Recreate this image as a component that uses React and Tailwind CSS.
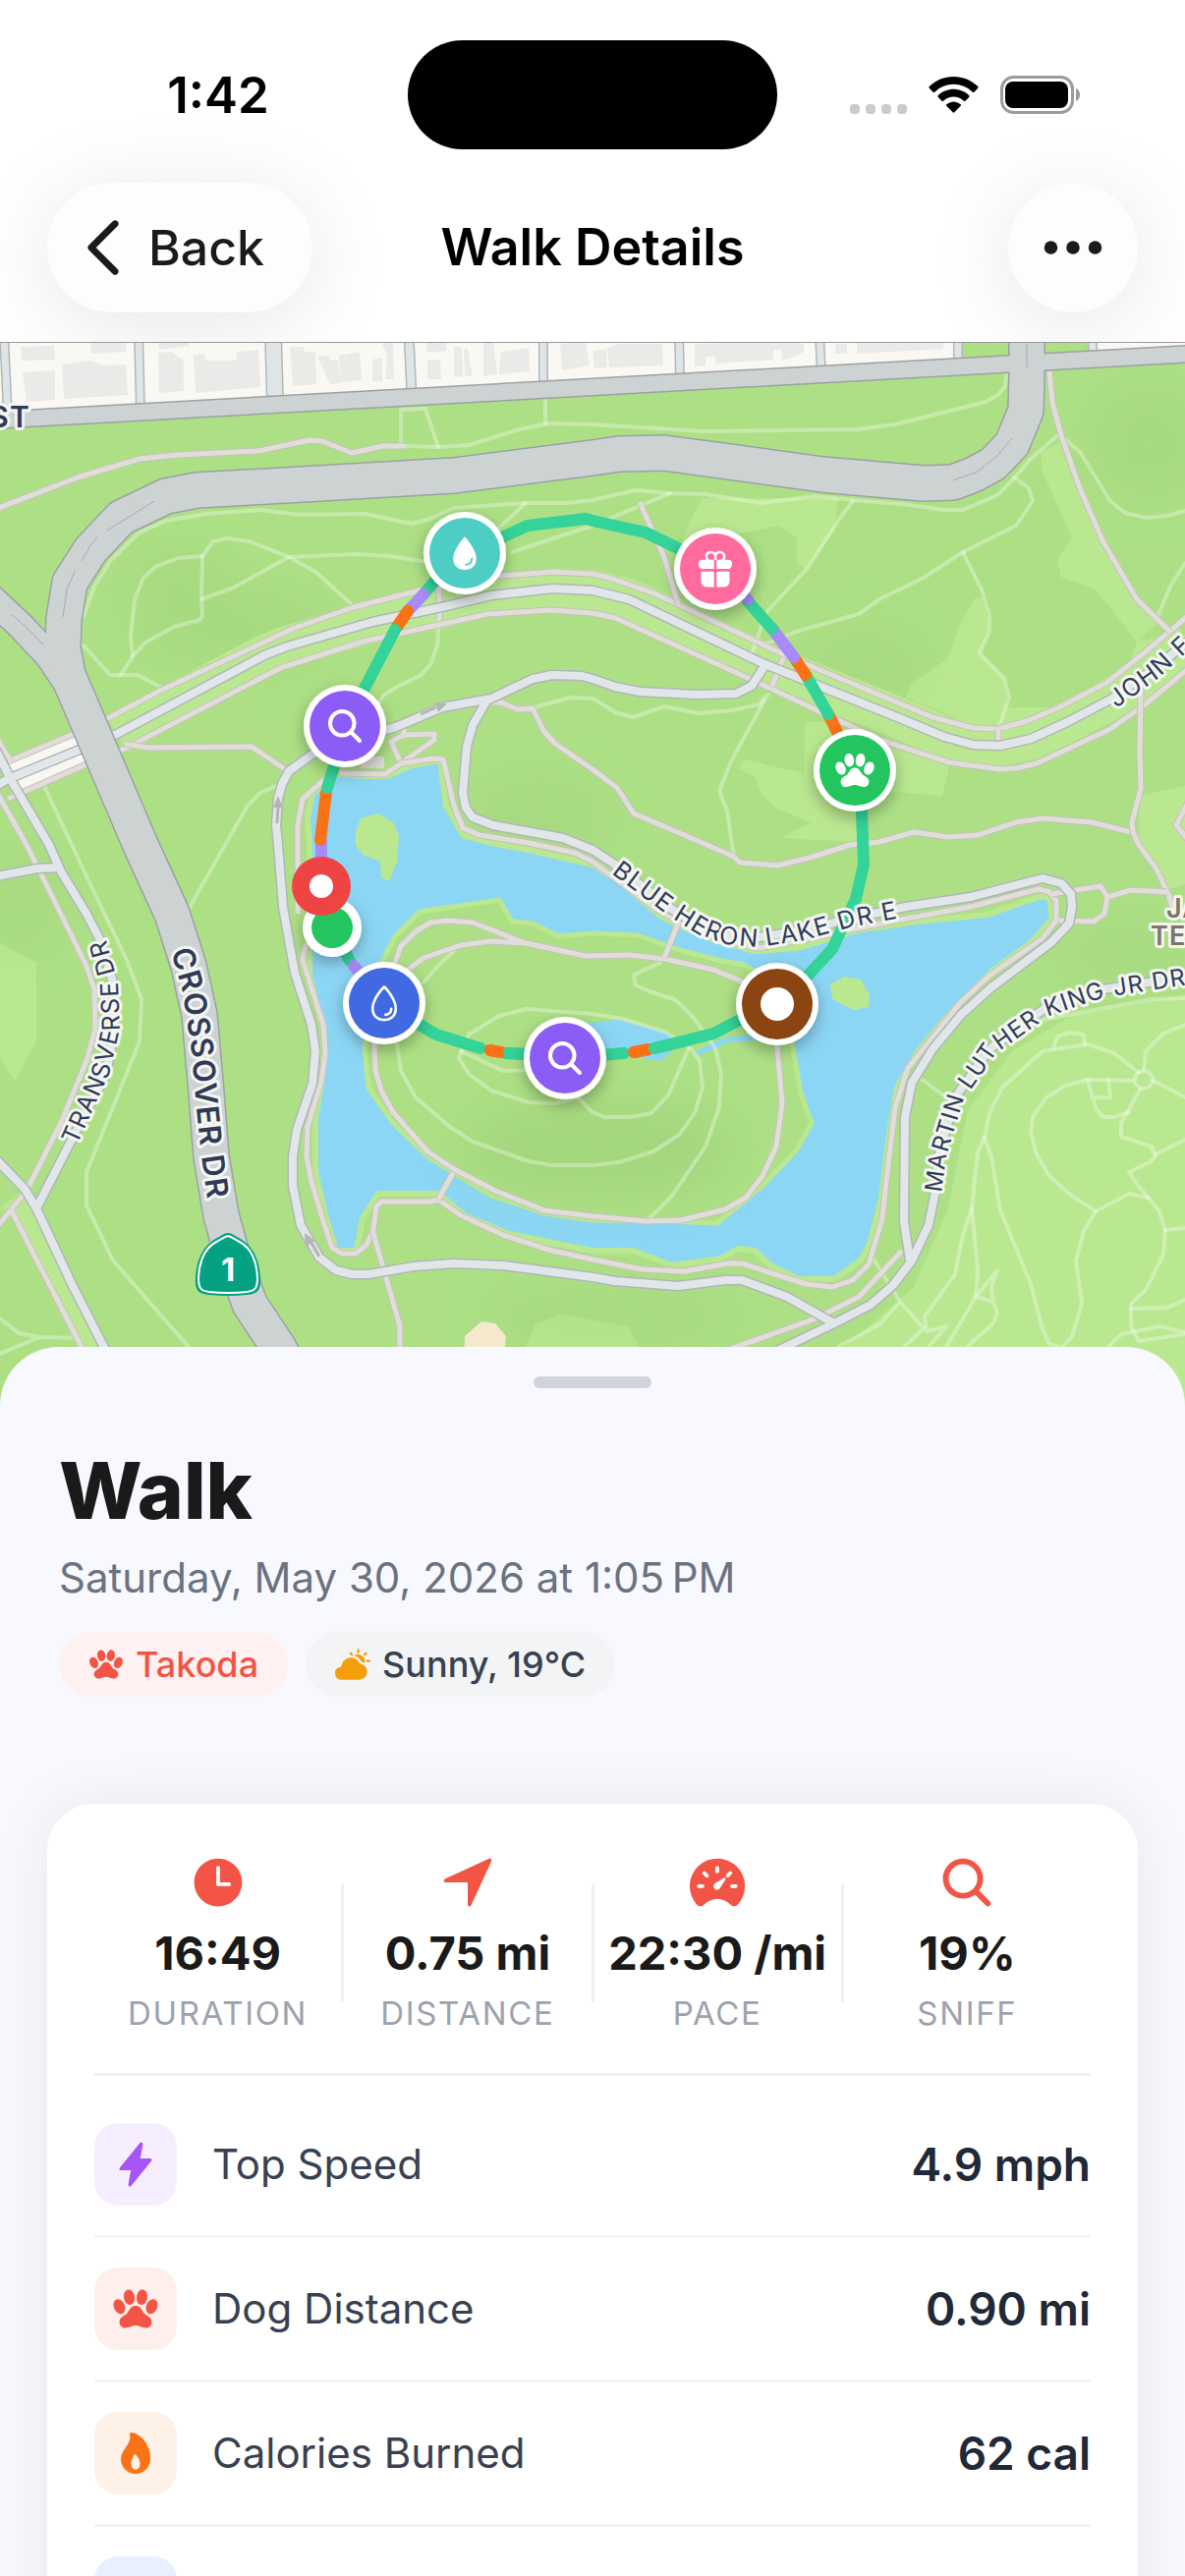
import {
  IoEllipsisHorizontal,
  IoFlame,
  IoFlash,
  IoGift,
  IoNavigate,
  IoPartlySunny,
  IoPaw,
  IoSearch,
  IoSpeedometer,
  IoTime,
  IoWater,
  IoWaterOutline,
} from 'react-icons/io5';

const stats = [
  { label: 'DURATION', value: '16:49', Icon: IoTime },
  { label: 'DISTANCE', value: '0.75 mi', Icon: IoNavigate },
  { label: 'PACE', value: '22:30 /mi', Icon: IoSpeedometer },
  { label: 'SNIFF', value: '19%', Icon: IoSearch },
];

const details = [
  { label: 'Top Speed', value: '4.9 mph', Icon: IoFlash, box: 'bg-[#f6eefe] text-[#a855f7]' },
  { label: 'Dog Distance', value: '0.90 mi', Icon: IoPaw, box: 'bg-[#feeeec] text-[#f25545]' },
  { label: 'Calories Burned', value: '62 cal', Icon: IoFlame, box: 'bg-[#fef1e8] text-[#f97316]' },
];

// Map data, all in map units
const blockStreets = [
  { d: 'M4 340L8 424', w: 8 },
  { d: 'M141 340L143 418', w: 8 },
  { d: 'M278 340L280 410', w: 16 },
  { d: 'M416 340L419 402', w: 9 },
  { d: 'M553 340L553 396', w: 8 },
  { d: 'M691 340L692 388', w: 8 },
  { d: 'M834 340L836 380', w: 8 },
  { d: 'M975 340L975 372', w: 8 },
  { d: 'M1112 340L1112 364', w: 8 },
];

const buildings = [
  'M21 353L55 352L56 366L22 367Z',
  'M23 379L56 377L56 407L27 409Z',
  'M63 371L92 367L104 372L128 371L130 402L65 406Z',
  'M92 348L128 348L128 358L93 360Z',
  'M161 348L193 348L193 352L162 356Z',
  'M161 359L175 358L187 367L187 398L162 400Z',
  'M197 361L208 360L209 367L240 367L241 358L263 356L265 394L199 400Z',
  'M295 353L309 353L310 358L321 358L322 391L298 393Z',
  'M323 363L334 362L336 366L344 367L346 390L336 391Z',
  'M345 362L366 358L368 387L346 389Z',
  'M379 366L389 364L389 388L379 388Z',
  'M389 350L400 348L401 386L392 386L394 362Z',
  'M434 348L454 348L454 357L434 359Z',
  'M435 367L448 366L449 386L435 386Z',
  'M462 353L470 353L471 383L462 384ZM472 356L476 354L481 382L473 383Z',
  'M492 348L502 348L506 381L492 383Z',
  'M510 358L538 354L539 378L508 381Z',
  'M570 350L596 348L600 372L572 377Z',
  'M603 358L617 355L618 374L605 375Z',
  'M618 354L630 350L674 350L675 372L620 374Z',
  'M707 350L795 348L818 350L818 358L806 364L796 366L795 356L787 356L787 366L728 370L728 363L719 363L718 372L707 373Z',
  'M850 350L862 350L862 360L850 360ZM872 348L960 348L960 355L872 360Z',
];

const lightPatches = [
  'M715 507L853 507L849 540L820 580L811 573L811 547L793 535L753 543L720 540L690 560L700 535Z',
  'M993 608L1000 608L1007 640L997 665L1022 690L1026 720L1076 720L1037 737L991 738L922 710L926 697L965 670L976 637Z',
  'M1059 460L1080 450L1099 497L1122 550L1157 610L1180 633L1157 653L1115 600L1080 587L1076 570L1091 547L1061 480Z',
  'M757 773L818 787L820 735L843 735L903 760L966 780L959 810L926 807L880 805L872 857L795 853L826 837L791 823L776 810L768 790L752 783Z',
  'M0 960L37 980L37 1060L15 1100L0 1077Z',
  'M1206 1012L1090 1034L1030 1070L985 1130L965 1230L930 1310L860 1371L860 1440L1206 1440Z',
  'M1160 810L1206 800L1206 900L1190 905L1159 860Z',
  'M1157 653L1192 645L1160 705L1135 720Z',
  'M535 1371L545 1348L570 1338L640 1350L650 1371Z',
  'M0 1230L12 1233L83 1371L108 1371L37 1230L25 1210Z',
];

const footpaths = [
  'M412 454L446 455L477 453L529 437L558 431L603 432L715 439L872 437L911 432L1003 409L1016 402L1023 393L1024 382',
  'M408 453L408 417L433 416L446 455M555 408L555 431',
  'M85 627L96 597L113 570L142 542L169 530L210 523L265 519L304 524L371 523L419 533L438 528L462 517L535 512L577 512L603 509L647 499L680 502L718 503L774 512L830 505L868 509L918 513L961 519L980 519L1015 504L1032 487L1049 467L1078 442L1099 460L1130 510L1145 522L1166 527L1188 525L1206 520',
  'M535 512L507 538M682 502L603 535L521 562',
  'M123 687L135 668L133 647L137 610L146 588L158 577L181 568L206 566L217 551L231 548L254 551L294 567L321 582L360 617',
  'M206 566L205 610L206 627L203 631L177 638L148 654L135 668',
  'M205 610L238 598L294 567L362 564L396 566L435 572',
  'M85 657L112 687L140 687L163 699',
  'M447 630L445 657L438 677L427 688L404 699L390 708L385 717',
  'M544 720L581 710L603 711L628 726L645 730L676 719L711 726L745 723L772 717L782 707',
  'M778 713L745 773L732 805L740 825L745 860L747 872',
  'M868 510L855 527L822 578L780 623L766 663',
  'M780 655L813 642L874 625L895 610L940 588L980 562L1034 535L1051 510L1047 497L1032 486',
  'M980 562L999 600L1007 627L1007 643L997 665L1022 690L1027 710L1016 742',
  'M1206 573L1191 597L1178 628',
  'M281 800L265 807L252 820L229 860L192 925',
  'M46 802L73 860L100 917L129 977L144 1017L142 1060L119 1117L88 1193L88 1227L115 1283L192 1371',
  'M0 1342L19 1357L40 1361L79 1362M40 1361L0 1378',
  'M467 963L446 983L431 1000',
  'M404 1063L408 1090L423 1117L458 1147L481 1162L538 1182L562 1186L603 1186L630 1183L665 1172L691 1155L707 1133L715 1107L712 1080L703 1067L676 1050L634 1037L603 1032L535 1027L508 1034L477 1053L467 1077L477 1093L500 1110L538 1122L565 1123L588 1117',
  'M469 1070L512 1090L538 1089M588 1117L603 1132L615 1137L641 1137L663 1133L680 1115L701 1067',
  'M672 980L645 992L647 1003L661 1009L688 1018L707 1037L728 1067L734 1093L732 1127L718 1167L684 1217L659 1242',
  'M1061 1038L1172 1017L1206 1016',
  'M1153 1100L1107 1099L1084 1105L1064 1118L1051 1137L1049 1153L1055 1175L1068 1197L1088 1215L1115 1233L1103 1253L1095 1283L1101 1327L1091 1360L1080 1372L1068 1368L1061 1353L1049 1307L1018 1232L1009 1177L1002 1158L1007 1133L1020 1107L1061 1070L1107 1063L1134 1072L1159 1092',
  'M1072 1067L1076 1055L1088 1051L1103 1053L1104 1063',
  'M1164 1089L1166 1070L1184 1052L1206 1043M1174 1100L1206 1117',
  'M1161 1108L1141 1143L1141 1157L1172 1167L1176 1177L1170 1183L1149 1193L1157 1205L1180 1233L1186 1253L1184 1277L1166 1313L1151 1327L1151 1350L1159 1365L1206 1358',
  'M1115 1233L1149 1215L1168 1219M1206 1250L1186 1252M1151 1332L1188 1331L1206 1323M1206 1160L1176 1175',
  'M1107 1099L1115 1127L1122 1137L1134 1137L1149 1132M1128 1099L1130 1117L1111 1117',
  'M1002 1158L995 1173L989 1230L980 1257L972 1297L941 1340L943 1355L963 1350L945 1371',
  'M989 1230L995 1293L993 1320L963 1371',
  'M1015 1293L993 1320L1011 1325L1009 1310L1015 1293M1011 1325L1015 1337L1011 1347L984 1371',
  'M888 1280L916 1325L940 1352L920 1371M916 1325L895 1348L853 1371',
  'M936 1097L963 1117',
  'M1128 1371L1141 1358L1180 1350L1206 1356',
];

const trails = [
  'M-4 518L79 486L142 467L181 463L263 459L315 448L328 449L358 461L390 454L412 454',
  'M8 775L75 747L110 731L163 703L300 639L360 618L427 601L511 586L563 582L603 584L620 588L663 603L690 615L799 667L949 730L990 741L1016 742L1045 734L1078 720L1126 695L1164 665L1210 626',
  'M8 813L88 778L127 762L285 680L369 653L496 625L561 621L603 624L626 629L768 693L895 753L966 776L1018 783L1034 782L1055 777L1130 742L1164 718L1210 680',
  'M447 600L447 630M797 670L786 698M1016 742L1016 756M-4 750L10 773',
  'M127 757L150 761L256 760L290 783',
  'M411 737L411 748M398 755L411 748L442 747L442 753L408 777Z',
  'M346 787L392 788L408 777L442 772L451 773L462 820L471 843L488 850L538 858L585 868L603 877L634 900L665 923L690 938L738 958L772 965L834 953L911 937L988 923L1057 905L1068 908L1075 917L1075 937L1061 955L1007 993L978 1020L924 1087L911 1127L903 1193L898 1240L884 1287L868 1303L847 1310L820 1307L755 1286L740 1286L697 1294L653 1292L603 1282L558 1272L512 1257L469 1237L446 1221L438 1223L388 1223L383 1228L380 1252L373 1267L362 1276L348 1276L338 1270L329 1243L317 1203L312 1177L313 1147L327 1100L331 1073L329 1043L308 977L312 960M303 930L303 840L308 813L331 793',
  'M446 1221L462 1192M379 1252L407 1350L407 1380',
  'M402 980L408 963L423 948L438 939L456 937L481 939L535 960L596 973L641 972L676 976L726 987L753 998L785 1030L791 1067L796 1123L790 1167L776 1197L759 1219L738 1231L693 1242L657 1243L603 1238L554 1232L504 1212L462 1190L435 1172L400 1132L388 1110L382 1090L381 1060L385 1030L415 987L431 975L469 962L500 958L535 960',
  'M690 940L676 975',
  'M500 715L510 715L527 722L542 721L554 745L565 757L603 783L628 802L645 828L715 858L747 872L753 878L791 881L824 873L865 860L895 857L930 847L965 852L995 850L1034 837L1061 833L1111 837L1151 847',
  'M651 511L676 567L691 617',
  'M1068 378L1071 410L1080 443L1099 497L1122 550L1157 610L1191 643',
  'M1157 690L1161 703L1160 767L1161 803L1152 837L1153 847L1159 860L1176 883L1189 910L1195 930',
  'M1070 910L1120 902L1127 913L1124 930L1113 938L1078 937M1127 913L1151 906L1188 908',
  'M1210 815L1197 840L1210 856',
  'M-4 805L27 860L42 890L88 983L96 1007L97 1047L88 1080L62 1143L27 1212L-4 1250M12 1233L83 1371L94 1396',
  'M730 1378L830 1342L874 1320L918 1273',
];

const roads = [
  'M-6 760L13 797L50 860L62 887L88 930L102 957L115 1000L117 1047L108 1093L73 1160L37 1230',
  'M-4 1180L25 1210L37 1230L73 1307L118 1395M-4 892L38 884L62 883',
  'M-6 801L8 793L81 763L119 747L269 667L292 658L379 633L454 617L500 606L563 599L603 601L640 610L776 675L918 732L961 750L990 758L1018 759L1049 752L1086 735L1130 712L1172 683L1210 652',
  'M778 678L765 698L749 706L709 707L651 704L626 699L603 691L592 688L562 687L542 691L500 711L450 720L410 737L400 741L350 753L319 767L294 785L287 798L283 813L281 840L283 860L288 923L300 990L317 1043L321 1070L318 1103L302 1150L298 1177L298 1207L306 1247L325 1280L342 1293L358 1297L375 1297L421 1289L462 1286L512 1288L603 1300L626 1304L690 1309L738 1303L755 1303L801 1320L849 1347',
  'M496 712L481 738L475 760L471 807L474 822L481 832L502 840L573 853L603 865L626 880L680 923L707 940L738 952L772 954L818 947L865 935L922 923L988 913L1061 894L1080 899L1090 910L1091 923L1088 940L1070 959L1009 1005L978 1033L949 1068L928 1102L921 1137L920 1243L926 1283',
  'M1210 994L1122 1007L1065 1025L1007 1068L972 1117L955 1177L952 1213L945 1247L928 1283L909 1308L886 1328L849 1347L795 1373L770 1385',
];

const jfk = 'M119 747L269 667L292 658L379 633L454 617L500 606L563 599L603 601L640 610L776 675L918 732L961 750L990 758L1018 759L1049 752L1086 735L1130 712L1172 683L1210 652';
const fulton = 'M-10 428L603 394L1216 360';
const branch = 'M-12 606L21 637L50 668L66 692';
const highway = 'M1045 330L1045 382L1044 418L1030 452L1011 472L991 483L970 491L939 492L837 483L676 461L630 462L603 466L462 484L308 493L200 499L169 505L123 527L92 560L71 593L65 630L64 660L69 687L96 750L143 860L175 930L192 983L203 1033L210 1113L215 1177L225 1237L235 1273L254 1327L283 1371L310 1420';

const lake = 'M338 788L373 790L394 790L419 779L448 774L454 820L471 850L500 858L538 865L603 880L630 897L672 932L691 942L730 958L768 968L811 965L872 947L934 938L1005 931L1057 913L1068 913L1071 935L1049 960L1011 987L968 1030L934 1070L913 1107L905 1153L897 1220L886 1263L876 1283L849 1302L813 1302L784 1288L768 1273L751 1271L734 1281L684 1288L645 1273L603 1273L577 1268L515 1255L473 1237L446 1215L385 1215L369 1240L363 1273L342 1273L331 1237L321 1193L321 1137L329 1093L329 1047L315 993L315 860L313 833L317 810Z';
const island = 'M387 983L402 953L427 928L481 920L508 916L521 938L542 940L569 953L603 950L649 952L695 968L734 978L757 982L790 1000L807 1067L815 1113L826 1143L811 1170L776 1207L730 1245L680 1243L603 1242L554 1235L500 1217L435 1177L400 1143L375 1107L371 1067L379 1010Z';

const route = [
  { d: 'M327 902L327 855', color: '#a78bfa' },
  { d: 'M326 855L332 807', color: '#f97316' },
  { d: 'M333 802L340 780L351 739', color: '#34d399' },
  { d: 'M431 605L473 555', color: '#34d399' },
  { d: 'M415 622L431 605', color: '#a78bfa' },
  { d: 'M404 638L415 622', color: '#f97316' },
  { d: 'M351 739L402 641', color: '#34d399' },
  { d: 'M473 563L515 545L537 535L596 528L603 530L657 542L690 558L728 579', color: '#34d399' },
  { d: 'M843 727L853 747L870 784', color: '#f97316' },
  { d: 'M820 687L843 727', color: '#34d399' },
  { d: 'M808 669L820 687', color: '#f97316' },
  { d: 'M786 640L808 669', color: '#a78bfa' },
  { d: 'M761 612L786 640', color: '#34d399' },
  { d: 'M728 579L761 610', color: '#a78bfa' },
  { d: 'M870 784L877 827L879 880L871 915L847 966L822 993L791 1022L749 1040L726 1052L666 1067', color: '#34d399' },
  { d: 'M660 1068L645 1071', color: '#f97316' },
  { d: 'M666 1067L700 1059', color: '#34d399' },
  { d: 'M635 1072L575 1077L535 1073L515 1072', color: '#34d399' },
  { d: 'M645 1071L650 1070', color: '#f97316' },
  { d: 'M510 1071L499 1069', color: '#f97316' },
  { d: 'M518 1072L535 1073', color: '#34d399' },
  { d: 'M489 1067L444 1053L427 1043L391 1021', color: '#34d399' },
  { d: 'M499 1069L503 1070', color: '#f97316' },
  { d: 'M356 978L338 945', color: '#34d399' },
  { d: 'M391 1021L360 983', color: '#a78bfa' },
];

const pins = [
  { x: 473, y: 563, color: '#4ecdc4', Icon: IoWater, size: 42 },
  { x: 728, y: 579, color: '#ff6b9d', Icon: IoGift, size: 42 },
  { x: 351, y: 739, color: '#8b5cf6', Icon: IoSearch, size: 42 },
  { x: 870, y: 784, color: '#22c55e', Icon: IoPaw, size: 42 },
  { x: 391, y: 1021, color: '#4169e1', Icon: IoWaterOutline, size: 42 },
  { x: 575, y: 1077, color: '#8b5cf6', Icon: IoSearch, size: 42 },
  { x: 791, y: 1022, color: '#8b4513', Icon: null, size: 0 },
];

function Line({ d, outer, inner, casing, fill }) {
  return (
    <>
      <path d={d} stroke={casing} strokeWidth={outer} />
      <path d={d} stroke={fill} strokeWidth={inner} />
    </>
  );
}

function Pin({ x, y, color, Icon, size }) {
  return (
    <g>
      <circle cx={x} cy={y} r="42" fill="#fff" filter="url(#pinShadow)" />
      <circle cx={x} cy={y} r="36" fill={color} />
      {Icon ? (
        <Icon x={x - size / 2} y={y - size / 2} size={size} color="#fff" />
      ) : (
        <circle cx={x} cy={y} r="17" fill="#fff" />
      )}
    </g>
  );
}

function RouteMap() {
  return (
    <svg viewBox="0 349 1206 1082" className="block w-full shrink-0 bg-[#ade085]" role="img" aria-label="Walk route map">
      <defs>
        <filter id="soft" x="-50%" y="-50%" width="200%" height="200%">
          <feGaussianBlur stdDeviation="22" />
        </filter>
        <filter id="pinShadow" x="-50%" y="-50%" width="200%" height="200%">
          <feDropShadow dx="0" dy="6" stdDeviation="8" floodColor="#000" floodOpacity="0.3" />
        </filter>
        <path id="crossoverLabel" d="M174 968L186 1010L195 1070L200 1130L205 1177L218 1270" />
        <path id="transverseLabel" d="M78 1166L111 1093L122 1047L120 1000L106 950L95 920" />
        <path id="heronLabel" d="M622 889L680 932L709 950L738 961L772 964L818 957L865 944L922 933L988 923" />
        <path id="kingLabel" d="M958 1214L963 1177L980 1121L1013 1073L1068 1034L1124 1015L1216 1001" />
        <path id="johnLabel" d="M1136 721L1178 691L1230 643" />
      </defs>

      {/* terrain */}
      <g fill="#bae890">
        {lightPatches.map((d) => (
          <path key={d} d={d} />
        ))}
      </g>
      <g fill="#94c771" opacity="0.22" filter="url(#soft)">
        <ellipse cx="240" cy="640" rx="100" ry="40" />
        <ellipse cx="180" cy="590" rx="60" ry="30" />
        <ellipse cx="550" cy="830" rx="70" ry="40" />
        <ellipse cx="20" cy="920" rx="40" ry="50" />
        <ellipse cx="880" cy="680" rx="60" ry="40" />
        <ellipse cx="1170" cy="450" rx="60" ry="60" />
        <ellipse cx="1150" cy="970" rx="70" ry="30" />
        <ellipse cx="620" cy="1340" rx="130" ry="30" />
      </g>
      <path d="M472 1380L473 1360L490 1345L504 1347L515 1360L513 1380Z" fill="#f4e9cd" />

      {/* city blocks */}
      <path d="M0 340L976 340L976 365L0 420Z" fill="#faf8f2" />
      <path d="M1116 340L1206 340L1206 352L1116 357Z" fill="#faf8f2" />
      <g fill="#ebeae8">
        {buildings.map((d) => (
          <path key={d} d={d} />
        ))}
      </g>
      <path d="M8 778L78 747L88 777L14 810Z" fill="#f8f7f1" />

      <g fill="none" strokeLinejoin="round">
        <path d={jfk} stroke="#bae890" strokeWidth="42" />
        {blockStreets.map(({ d, w }) => (
          <Line key={d} d={d} outer={w + 2} inner={w - 1} casing="#b0b8ba" fill="#dfe5e6" />
        ))}
      </g>

      {/* water */}
      <path d={lake} fill="#8bd6f5" stroke="#bae890" strokeWidth="6" strokeLinejoin="round" />
      <path d={island} fill="#ade085" stroke="#bae890" strokeWidth="5" strokeLinejoin="round" />
      <ellipse cx="610" cy="1170" rx="140" ry="50" fill="#94c771" opacity="0.35" filter="url(#soft)" />
      <path d="M590 1042L630 1038L680 1052L691 1063L672 1080L640 1074L590 1068Z" fill="#8bd6f5" />
      <path d="M707 1070L738 1056L785 1052L785 1058L740 1061L712 1074Z" fill="#8bd6f5" />
      <g fill="#bae890">
        <path d="M385 828L400 837L406 850L404 877L396 897L388 893L387 877L369 870L362 860L362 847L367 833Z" />
        <path d="M859 994L876 997L885 1012L884 1025L868 1028L847 1017L845 1002Z" />
      </g>

      <g fill="none" strokeLinejoin="round">
        <g stroke="#fff" strokeOpacity="0.32" strokeWidth="4" strokeLinecap="round">
          {footpaths.map((d) => (
            <path key={d} d={d} />
          ))}
          <circle cx="1164" cy="1099" r="9" />
        </g>
        <path d="M372 770L391 770L391 782L366 782Z" fill="#dedcda" />
        {trails.map((d) => (
          <Line key={d} d={d} outer="7" inner="5" casing="#c6c2be" fill="#e1deda" />
        ))}
        {roads.map((d) => (
          <path key={d} d={d} stroke="#b0b6b9" strokeWidth="11" />
        ))}
        {roads.map((d) => (
          <path key={d} d={d} stroke="#e1e7e8" strokeWidth="8" />
        ))}
        <path d={fulton} stroke="#9ba1a3" strokeWidth="19" />
        <path d={branch} stroke="#9ba1a3" strokeWidth="30" />
        <path d={highway} stroke="#9ba1a3" strokeWidth="38" />
        <path d={fulton} stroke="#cdd3d3" strokeWidth="16" />
        <path d={branch} stroke="#cdd3d3" strokeWidth="27" />
        <path d={highway} stroke="#cdd3d3" strokeWidth="35" />
        <path d="M12 626L25 637L44 656M64 628L68 600L76 582M83 571L92 555L100 546M109 540L157 510M970 489L995 480L1015 464L1030 446M1045 350L1045 374" stroke="#a5abad" strokeWidth="1" />
        <path d="M428 727L444 720M282 838L283 822M325 1279L317 1265" stroke="#b5b5b3" strokeWidth="3" />
      </g>
      <g fill="#b5b5b3">
        <path d="M455 716L443 715L446 725Z" />
        <path d="M283 810L278 822L288 822Z" />
        <path d="M310 1255L311 1269L321 1263Z" />
      </g>

      {/* walked route */}
      <g fill="none" strokeWidth="12" strokeLinecap="round" strokeLinejoin="round">
        {route.map(({ d, color }) => (
          <path key={d} d={d} stroke={color} />
        ))}
      </g>

      {/* street names */}
      <g
        fill="#303a57"
        stroke="#f4f6f2"
        strokeWidth="6"
        strokeLinejoin="round"
        paintOrder="stroke"
        className="font-[Inter,sans-serif] text-[25px] tracking-wider"
      >
        <text className="text-[31px] font-semibold">
          <textPath href="#crossoverLabel">CROSSOVER DR</textPath>
        </text>
        <text>
          <textPath href="#transverseLabel">TRANSVERSE DR</textPath>
        </text>
        <text>
          <textPath href="#heronLabel">BLUE HERON LAKE DR E</textPath>
        </text>
        <text className="text-[24px]">
          <textPath href="#kingLabel">MARTIN LUTHER KING JR DR</textPath>
        </text>
        <text>
          <textPath href="#johnLabel">JOHN F</textPath>
        </text>
        <text x="31" y="435" textAnchor="end" className="text-[30px] font-semibold">ST</text>
        <g fill="#7e7565" className="text-[27px] font-semibold">
          <text x="1187" y="934">JA</text>
          <text x="1171" y="962">TE</text>
        </g>
      </g>

      {/* route 1 shield */}
      <path d="M232 1255C236 1255 239 1258 243 1260C257 1267 264 1282 265 1300C266 1314 262 1317 251 1318Q232 1320 213 1318C202 1317 198 1314 199 1300C200 1282 207 1267 221 1260C225 1258 228 1255 232 1255Z" fill="#04a282" />
      <path d="M232 1258C236 1259 238 1261 242 1263C255 1269 261 1283 262 1300C262 1311 260 1314 251 1315Q232 1317 213 1315C204 1314 202 1311 202 1300C203 1283 209 1269 222 1263C226 1261 228 1259 232 1258Z" fill="none" stroke="#fff" strokeWidth="2" />
      <text x="232" y="1304" textAnchor="middle" fill="#fff" className="font-[Inter,sans-serif] text-[33px] font-bold">1</text>

      {/* start and finish */}
      <circle cx="338" cy="944" r="30" fill="#fff" filter="url(#pinShadow)" />
      <circle cx="338" cy="944" r="21" fill="#22c55e" />
      <circle cx="327" cy="902" r="30" fill="#ef4444" />
      <circle cx="327" cy="902" r="12" fill="#fff" />

      {pins.map((pin) => (
        <Pin key={`${pin.x}-${pin.y}`} {...pin} />
      ))}
    </svg>
  );
}

function StatusBar() {
  return (
    <div className="grid grid-cols-3 items-center pt-[41px]">
      <div className="pl-[42px] text-center text-[51px] leading-[60px] font-semibold text-black">1:42</div>
      <div className="h-[111px] w-[376px] justify-self-center rounded-full bg-black" />
      <div className="flex items-center justify-end gap-[22px] pr-[106px]">
        <div className="flex gap-[6px] pt-7">
          <span className="size-[10px] rounded-[4px] bg-[#cbcbcb]" />
          <span className="size-[10px] rounded-[4px] bg-[#cbcbcb]" />
          <span className="size-[10px] rounded-[4px] bg-[#cbcbcb]" />
          <span className="size-[10px] rounded-[4px] bg-[#cbcbcb]" />
        </div>
        <svg viewBox="0 0 51 37" className="h-[37px] w-[51px]" aria-label="Wi-Fi">
          <path d="M25.500 0C35 0 43.600 3.700 50 9.800a1.500 1.500 0 0 1 0 2.200l-3.300 3.400a1.500 1.500 0 0 1-2.200 0A27.500 27.500 0 0 0 25.500 7.800A27.500 27.500 0 0 0 6.500 15.400a1.500 1.500 0 0 1-2.200 0L1 12a1.500 1.500 0 0 1 0-2.200C7.400 3.700 16 0 25.500 0Z" />
          <path d="M25.500 12.800C31.500 12.800 37 15.100 41.100 18.900a1.500 1.500 0 0 1 0 2.200l-3.400 3.400a1.500 1.500 0 0 1-2.100 0A15 15 0 0 0 25.500 20.600A15 15 0 0 0 15.400 24.500a1.500 1.500 0 0 1-2.100 0L9.900 21.100a1.500 1.500 0 0 1 0-2.200C14 15.100 19.500 12.800 25.500 12.800Z" />
          <path d="M25.500 25.400a11 11 0 0 1 6.900 2.500a1.500 1.500 0 0 1 .1 2.200l-5.900 6a1.500 1.500 0 0 1-2.200 0l-5.900-6a1.500 1.500 0 0 1 .1-2.200a11 11 0 0 1 6.900-2.500Z" />
        </svg>
        <svg viewBox="0 0 82 39" className="h-[39px] w-[82px]" aria-label="Battery">
          <rect x="1.500" y="1.500" width="72" height="36" rx="12" fill="none" stroke="#9b9b9b" strokeWidth="3" />
          <rect x="5" y="6" width="64" height="27" rx="8" />
          <path d="M77 13C80 14 81 17 81 19.500S80 25 77 26Z" fill="#9b9b9b" />
        </svg>
      </div>
    </div>
  );
}

function Header() {
  const floating = 'flex h-[132px] items-center rounded-full bg-[#fdfdfd] text-[#1a1a1a] shadow-[0_12px_90px_rgba(0,0,0,0.1)]';
  return (
    <header className="relative z-10 shrink-0 overflow-hidden border-b border-[#9a9a9a] bg-white">
      <StatusBar />
      <div className="grid grid-cols-[1fr_auto_1fr] items-center px-12 pt-[34px] pb-[30px]">
        <button type="button" className={`${floating} w-[270px] gap-[30px] pl-10`}>
          <svg viewBox="0 0 34 58" className="h-[58px] w-[33px]" fill="none" stroke="currentColor" strokeWidth="7" strokeLinecap="round" strokeLinejoin="round" aria-hidden="true">
            <path d="M30 4L5 29L30 54" />
          </svg>
          <span className="text-[50px] leading-[60px] font-medium">Back</span>
        </button>
        <h1 className="text-[52px] leading-[60px] font-semibold text-black">Walk Details</h1>
        <button type="button" aria-label="More options" className={`${floating} w-[132px] justify-center justify-self-end`}>
          <IoEllipsisHorizontal size={72} />
        </button>
      </div>
    </header>
  );
}

export default function App() {
  return (
    <div className="flex h-screen flex-col overflow-hidden bg-[#f8f9ff] font-[Inter,sans-serif]">
      <Header />
      <RouteMap />

      <main className="relative -mt-[60px] shrink-0 rounded-t-[60px] bg-[#f8f9ff] pt-[30px]">
        <div className="mx-auto h-3 w-[120px] rounded-full bg-[#d0d3dc]" />

        <section className="px-[60px] pt-[54px]">
          <h2 className="text-[80px] leading-[100px] font-extrabold text-[#1a1a1a]">Walk</h2>
          <p className="mt-3 text-[42px] leading-[54px] text-[#6b7280]">Saturday, May 30, 2026 at 1:05{'\u202f'}PM</p>
          <div className="mt-[28px] flex gap-[18px]">
            <span className="flex h-[66px] items-center gap-3 rounded-full bg-[#fff1f1] px-[30px] text-[36px] font-medium text-[#f25545]">
              <IoPaw size={36} />
              Takoda
            </span>
            <span className="flex h-[66px] items-center gap-3 rounded-full bg-[#f2f4f6] px-[30px] text-[36px] font-medium text-[#374151]">
              <IoPartlySunny size={36} color="#f59e0b" />
              Sunny, 19°C
            </span>
          </div>
        </section>

        <section className="mx-12 mt-[109px] rounded-[48px] bg-white px-12 pt-[50px] pb-12 shadow-[0_0_60px_rgba(0,0,0,0.07)]">
          <div className="flex items-center border-b-[3px] border-[#efefef] pb-10">
            {stats.map(({ label, value, Icon }, i) => (
              <div key={label} className="contents">
                {i > 0 && <div className="h-[120px] w-[3px] bg-[#f0f0f0]" />}
                <div className="flex w-0 flex-1 flex-col items-center">
                  <Icon size={60} color="#f25545" />
                  <p className="mt-3 text-[47px] leading-[60px] font-bold whitespace-nowrap text-[#1a1a1a]">{value}</p>
                  <p className="mt-[10px] text-[33px] leading-[42px] tracking-wider text-[#9ca3af]">{label}</p>
                </div>
              </div>
            ))}
          </div>

          <ul className="pt-[18px]">
            {details.map(({ label, value, Icon, box }) => (
              <li key={label} className="flex items-center border-b-[3px] border-[#f3f4f5] py-[30px]">
                <span className={`flex size-[84px] items-center justify-center rounded-3xl ${box}`}>
                  <Icon size={48} />
                </span>
                <span className="ml-9 flex-1 text-[42px] leading-[54px] text-[#374151]">{label}</span>
                <span className="text-[46px] leading-[54px] font-semibold text-[#1f2937]">{value}</span>
              </li>
            ))}
            <li className="py-[30px]">
              <span className="block size-[84px] rounded-3xl bg-[#e8effe]" />
            </li>
          </ul>
        </section>
      </main>
    </div>
  );
}
